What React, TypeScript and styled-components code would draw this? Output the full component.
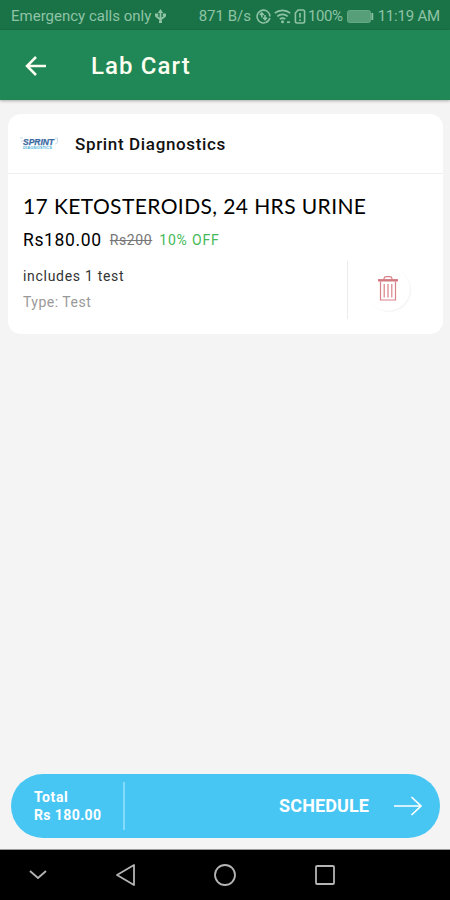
import React from 'react';
import styled, { createGlobalStyle } from 'styled-components';

const GlobalStyle = createGlobalStyle`
  *, *::before, *::after { box-sizing: border-box; }
  body { margin: 0; background: #f4f4f4; }
  svg { display: block; flex: none; }
`;

const Screen = styled.div`
  display: flex;
  flex-direction: column;
  width: 450px;
  height: 900px;
  overflow: hidden;
  background: #f4f4f4;
  font-family: Roboto, sans-serif;
  color: #111;
`;

const StatusBar = styled.div`
  display: flex;
  align-items: center;
  flex: none;
  height: 30px;
  padding: 2px 10px 0 11px;
  background: #197347;
  color: #8fc3a6;
`;

const Spacer = styled.div`
  flex: 1;
`;

const Label = styled.span<{
  $size: number;
  $weight?: number;
  $color?: string;
  $track?: number;
  $line?: number;
  $gap?: number;
  $font?: string;
  $strike?: boolean;
}>`
  flex: none;
  white-space: nowrap;
  font-size: ${(p) => p.$size}px;
  font-weight: ${(p) => p.$weight ?? 400};
  color: ${(p) => p.$color ?? 'inherit'};
  letter-spacing: ${(p) => p.$track ?? 0}px;
  line-height: ${(p) => p.$line ?? 20}px;
  margin-left: ${(p) => p.$gap ?? 0}px;
  font-family: ${(p) => p.$font ?? 'Roboto'}, sans-serif;
  text-decoration: ${(p) => (p.$strike ? 'line-through' : 'none')};
`;

const StatusIcon = styled.svg<{ $gap?: number }>`
  margin-left: ${(p) => p.$gap ?? 0}px;
`;

const AppBar = styled.header`
  display: flex;
  align-items: center;
  flex: none;
  height: 70px;
  padding: 1px 0 0 25px;
  background: #208757;
  color: #fcfff0;
  box-shadow: 0 1px 3px rgba(0, 0, 0, 0.3);
`;

const Card = styled.section`
  flex: none;
  height: 220px;
  margin: 14px 7px 0 8px;
  border-radius: 13px;
  background: #fff;
`;

const LabHeader = styled.div`
  display: flex;
  align-items: center;
  height: 60px;
  padding-left: 11px;
  border-bottom: 1px solid #eee;
`;

const Details = styled.div`
  padding: 18px 16px 0 15px;
  color: #000;
`;

const PriceRow = styled.div`
  display: flex;
  align-items: center;
  height: 24px;
  margin-top: 8px;
`;

const InfoRow = styled.div`
  display: flex;
  height: 58px;
  margin-top: 9px;
`;

const Notes = styled.div`
  display: flex;
  flex-direction: column;
  gap: 6px;
  width: 325px;
  padding-top: 5px;
  border-right: 1px solid #ececec;
`;

const DeleteButton = styled.button`
  display: flex;
  align-items: center;
  justify-content: center;
  width: 44px;
  height: 44px;
  margin: 6px 0 0 18px;
  padding: 0;
  border: 0;
  border-radius: 50%;
  background: #fff;
  box-shadow: 1px 1px 1px rgba(0, 0, 0, 0.05);
`;

const ScheduleBar = styled.div`
  display: flex;
  align-items: center;
  flex: none;
  height: 64px;
  margin: 0 10px 11px 11px;
  padding: 0 17px 0 23px;
  border-radius: 32px;
  background: #48c6f3;
  color: #fff;
`;

const Total = styled.div`
  display: flex;
  flex-direction: column;
  justify-content: center;
  width: 91px;
  height: 48px;
  border-right: 2px solid #83dafa;
`;

const NavBar = styled.nav`
  display: flex;
  align-items: center;
  flex: none;
  height: 51px;
  padding-left: 28px;
  border-top: 1px solid #999;
  background: #000;
`;

const NavIcon = styled.svg<{ $gap?: number }>`
  margin-left: ${(p) => p.$gap ?? 0}px;
  fill: none;
  stroke: #b4b4b4;
  stroke-width: 1.8;
  stroke-linejoin: round;
`;

const UsbIcon = () => (
  <StatusIcon $gap={4} width="11" height="15" viewBox="0 0 11 15" fill="none" stroke="currentColor" strokeWidth="1.8">
    <path d="M5.5 2v11M1.5 6v1.5l4 3 4-3V6" />
    <path d="M5.5 0 2.8 4h5.4zM0 4.5h3.2v3H0zM7.8 4.5H11v3H7.8zM4 11.5h3V14H4z" fill="currentColor" stroke="none" />
  </StatusIcon>
);

const SyncIcon = () => (
  <StatusIcon $gap={5} width="15" height="15" viewBox="0 0 15 15" fill="none" stroke="currentColor" strokeWidth="1.6">
    <path d="M9.5 13.6A6.4 6.4 0 1 1 13.9 7.5" />
    <path d="M5.8 4v4.6M3.9 6l1.9-2 1.9 2M9 6v4.4M7.2 8.6 9 10.5l1.9-1.900M9.5 13.600q3.300-.9 4.400-4.600" />
  </StatusIcon>
);

const WifiIcon = () => (
  <StatusIcon $gap={3} width="17" height="15" viewBox="0 0 17 15" fill="none" stroke="currentColor" strokeWidth="1.7">
    <path d="M.8 4.2C5.2.3 11.8.3 16.2 4.2M3.3 7.3c3-2.7 7.4-2.7 10.4 0M5.8 10.2c1.6-1.4 3.8-1.4 5.4 0" />
    <circle cx="8.5" cy="12.7" r="1.5" fill="currentColor" stroke="none" />
    <path d="M13 13.2h3" />
  </StatusIcon>
);

const SimIcon = () => (
  <StatusIcon $gap={3} width="12" height="15" viewBox="0 0 11 15" fill="none" stroke="currentColor" strokeWidth="1.6">
    <path d="M3.6 1h4.8q1.7 0 1.7 1.7v9.6q0 1.7-1.7 1.7H2.6Q.9 14 .9 12.3V4z" />
    <path d="M5.5 4v4.8M5.5 10.2v1.7" />
  </StatusIcon>
);

const BatteryIcon = () => (
  <StatusIcon $gap={4} width="27" height="13" viewBox="0 0 27 13">
    <rect x=".5" y=".5" width="23" height="12" rx="2" fill="#579f79" stroke="#65a985" />
    <path d="M25.3 3v7" stroke="#8fc3a6" strokeWidth="1.8" />
  </StatusIcon>
);

const BackIcon = () => (
  <svg width="22" height="22" viewBox="0 0 22 22" fill="none" stroke="currentColor" strokeWidth="2.5">
    <path d="M21 11H2.5M11 2 2 11l9 9" />
  </svg>
);

const SprintLogo = () => (
  <svg width="40" height="18" viewBox="0 0 40 18">
    <path d="M1 3h3M2 6h3M36 3h2.5v5L36 9" fill="none" stroke="#c9dff0" strokeWidth="1" />
    <text x="4" y="9.6" fontFamily="Liberation Sans, sans-serif" fontSize="8.6" fontWeight="700" fontStyle="italic" fill="#39699f" stroke="#39699f" strokeWidth=".25" textLength="31" lengthAdjust="spacingAndGlyphs">SPRINT</text>
    <text x="4" y="14" fontFamily="Liberation Sans, sans-serif" fontSize="3.8" fontWeight="700" fill="#52b4dc" textLength="29" lengthAdjust="spacingAndGlyphs">DIAGNOSTICS</text>
  </svg>
);

const TrashIcon = () => (
  <svg width="20" height="26" viewBox="0 0 20 26" fill="none" stroke="#d98289" strokeWidth="1.2">
    <path d="M2.5 5.5V24h15V5.500M6.200 8v13.500M10 8v13.500M13.800 8v13.500M6 3c0-1.500 1-2.400 2.300-2.400h3.400C13 .6 14 1.500 14 3" />
    <path d="M0 4.300h20" stroke="#d27880" strokeWidth="2.4" />
  </svg>
);

const ArrowIcon = styled.svg`
  margin-left: 25px;
`;

export default function App() {
  return (
    <>
      <GlobalStyle />
      <Screen>
        <StatusBar>
          <Label $size={15}>Emergency calls only</Label>
          <UsbIcon />
          <Spacer />
          <Label $size={15}>871 B/s</Label>
          <SyncIcon />
          <WifiIcon />
          <SimIcon />
          <Label $size={15} $gap={2} $track={-0.4}>100%</Label>
          <BatteryIcon />
          <Label $size={15} $gap={4} $track={-0.2}>11:19 AM</Label>
        </StatusBar>
        <AppBar>
          <BackIcon />
          <Label $size={24} $weight={500} $track={1.1} $line={30} $gap={44}>Lab Cart</Label>
        </AppBar>
        <Card>
          <LabHeader>
            <SprintLogo />
            <Label $size={17} $weight={500} $track={0.65} $gap={16}>Sprint Diagnostics</Label>
          </LabHeader>
          <Details>
            <Label as="div" $size={21} $line={28} $track={0.4} $font="Lato">17 KETOSTEROIDS, 24 HRS URINE</Label>
            <PriceRow>
              <Label $size={17.5} $track={0.65}>Rs180.00</Label>
              <Label $size={14} $track={0.6} $color="#777" $gap={8} $strike>Rs200</Label>
              <Label $size={14} $track={0.8} $color="#45b957" $gap={7}>10% OFF</Label>
            </PriceRow>
            <InfoRow>
              <Notes>
                <Label $size={14} $color="#333" $track={0.7}>includes 1 test</Label>
                <Label $size={14} $color="#999" $track={0.5}>Type: Test</Label>
              </Notes>
              <DeleteButton aria-label="Remove test">
                <TrashIcon />
              </DeleteButton>
            </InfoRow>
          </Details>
        </Card>
        <Spacer />
        <ScheduleBar>
          <Total>
            <Label $size={14} $weight={700} $line={18} $track={0.6}>Total</Label>
            <Label $size={14} $weight={700} $line={18} $track={0.4}>Rs 180.00</Label>
          </Total>
          <Spacer />
          <Label $size={18} $weight={700} $track={0.1}>SCHEDULE</Label>
          <ArrowIcon width="29" height="20" viewBox="0 0 29 20" fill="none" stroke="currentColor" strokeWidth="1.7">
            <path d="M0 10h26.5M17.5 1l9.5 9-9.500 9" />
          </ArrowIcon>
        </ScheduleBar>
        <NavBar>
          <NavIcon width="20" height="14" viewBox="0 0 20 14"><path d="m2 3 8 7 8-7" /></NavIcon>
          <NavIcon $gap={67} width="21" height="24" viewBox="0 0 21 24"><path d="M19 2v20L2 12z" /></NavIcon>
          <NavIcon $gap={77} width="24" height="24" viewBox="0 0 24 24"><circle cx="12" cy="12" r="10" /></NavIcon>
          <NavIcon $gap={78} width="20" height="20" viewBox="0 0 20 20"><rect x="1" y="1" width="18" height="18" rx="1" /></NavIcon>
        </NavBar>
      </Screen>
    </>
  );
}
